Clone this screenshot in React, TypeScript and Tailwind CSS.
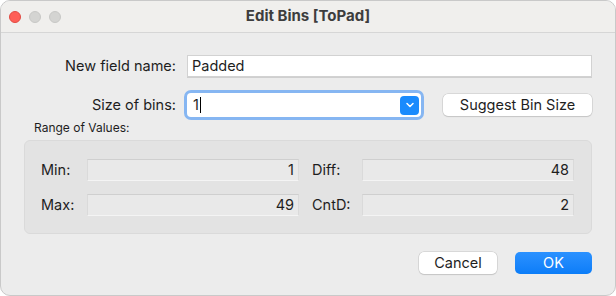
import { ChevronDown } from "lucide-react";

const font = { fontFamily: "Inter, 'Noto Sans', sans-serif" };

function ReadField({ value }: { value: string }) {
  return (
    <div className="flex h-[22px] flex-1 items-center justify-end border border-t-[#cfcfcf] border-x-[#dadada] border-b-[#f4f4f4] bg-[#e9e9e9] pr-[4px] text-[14.5px] text-[#1e1e1e]">
      {value}
    </div>
  );
}

export default function App() {
  return (
    <div className="h-[296px] w-[616px] bg-white" style={font}>
      <div className="flex h-full w-full flex-col overflow-hidden rounded-[10px] border border-[#c9c9c9] bg-[#ececec]">
        {/* title bar */}
        <div className="relative flex h-[32px] shrink-0 items-center border-b border-[#d6d6d6] bg-[#f0efed]">
          <div className="flex items-center gap-[8px] pl-[8px]">
            <span className="h-[12px] w-[12px] rounded-full border border-[#e24b43] bg-[#fe5f57]" />
            <span className="h-[12px] w-[12px] rounded-full border border-[#c8c8c6] bg-[#d4d4d2]" />
            <span className="h-[12px] w-[12px] rounded-full border border-[#c8c8c6] bg-[#d4d4d2]" />
          </div>
          <div className="absolute inset-0 flex items-center justify-center text-[15px] font-bold text-[#3d3d3d]">
            Edit Bins [ToPad]
          </div>
        </div>

        <div className="flex flex-1 flex-col pl-[23px] pr-[23px] pt-[22px]">
          {/* field name */}
          <div className="flex h-[22px] items-center">
            <div className="w-[152px] text-right text-[14.5px] text-[#1e1e1e]">New field name:</div>
            <div className="ml-[11px] flex h-[22px] flex-1 items-center border border-[#d2d2d2] bg-white pl-[4px] text-[14.5px] text-[#1e1e1e] shadow-[0_1px_0_#cfcfcf]">
              Padded
            </div>
          </div>

          {/* size of bins */}
          <div className="mt-[16px] flex h-[24px] items-center">
            <div className="w-[152px] text-right text-[14.5px] text-[#1e1e1e]">Size of bins:</div>
            <div className="ml-[11px] flex h-[24px] w-[234px] items-center rounded-[4px] bg-white pl-[6px] pr-[2px] text-[14.5px] text-[#1e1e1e] ring-[3px] ring-[#86b6f2]">
              <span>1</span>
              <span className="ml-[1px] h-[16px] w-[1px] bg-black" />
              <span className="ml-auto flex h-[19px] w-[19px] items-center justify-center rounded-[4px] bg-[#1a8bfd]">
                <ChevronDown size={12} strokeWidth={3} color="white" />
              </span>
            </div>
            <button className="ml-auto flex h-[22px] w-[149px] items-center justify-center rounded-[5px] bg-white text-[14.5px] text-[#1e1e1e] shadow-[0_0_0_0.5px_#c4c4c4,0_1px_1px_#c9c9c9]">
              Suggest Bin Size
            </button>
          </div>

          <div className="mt-[4px] pl-[10px] text-[12px] leading-[14px] text-[#1e1e1e]">Range of Values:</div>

          {/* group box */}
          <div className="mt-[5px] flex h-[94px] flex-col gap-[13px] rounded-[6px] border border-[#dadada] bg-[#e3e3e3] pl-[16px] pr-[17px] pt-[18px]">
            <div className="flex items-center">
              <div className="w-[46px] text-[14.5px] text-[#1e1e1e]">Min:</div>
              <ReadField value="1" />
              <div className="ml-[13px] w-[50px] text-[14.5px] text-[#1e1e1e]">Diff:</div>
              <ReadField value="48" />
            </div>
            <div className="flex items-center">
              <div className="w-[46px] text-[14.5px] text-[#1e1e1e]">Max:</div>
              <ReadField value="49" />
              <div className="ml-[13px] w-[50px] text-[14.5px] text-[#1e1e1e]">CntD:</div>
              <ReadField value="2" />
            </div>
          </div>

          {/* footer buttons */}
          <div className="mt-[18px] flex justify-end gap-[18px]">
            <button className="flex h-[22px] w-[78px] items-center justify-center rounded-[5px] bg-white text-[14.5px] text-[#1e1e1e] shadow-[0_0_0_0.5px_#c4c4c4,0_1px_1px_#c9c9c9]">
              Cancel
            </button>
            <button className="flex h-[22px] w-[77px] items-center justify-center rounded-[5px] bg-gradient-to-b from-[#2a91ff] to-[#0a7df8] text-[14.5px] text-white">
              OK
            </button>
          </div>
        </div>
      </div>
    </div>
  );
}
